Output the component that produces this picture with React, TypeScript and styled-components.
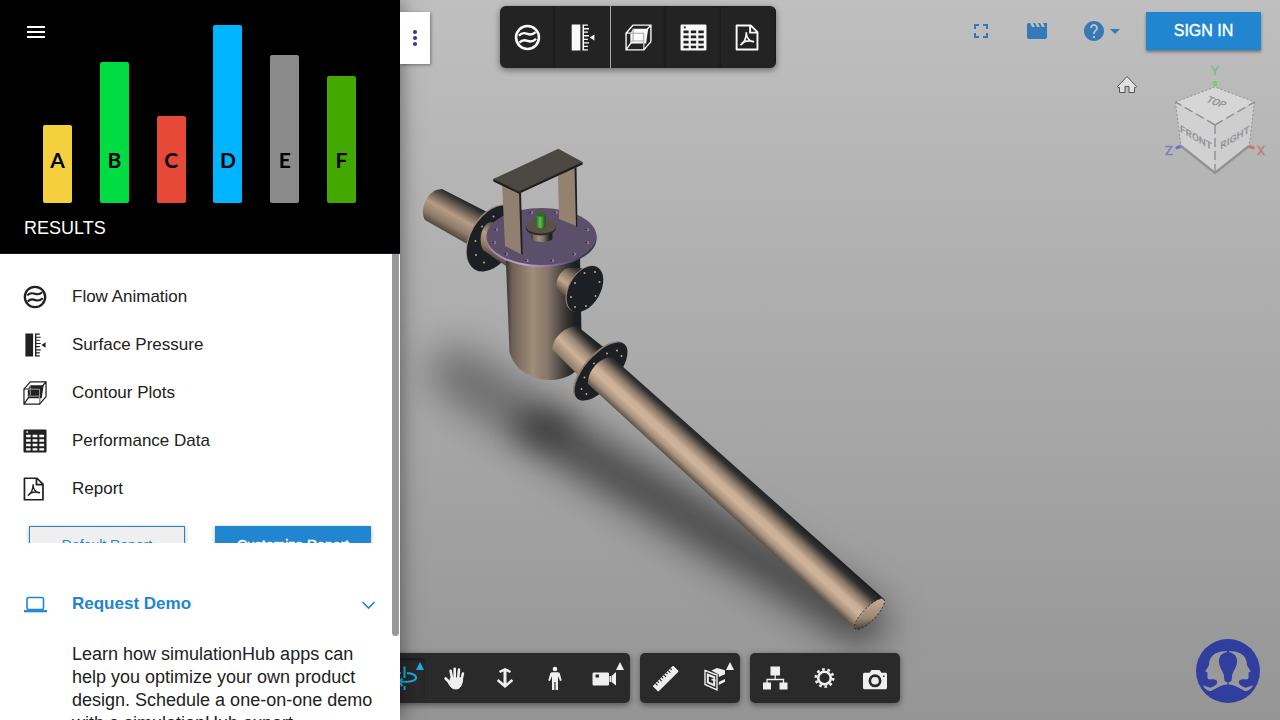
import React from "react";
import styled, { createGlobalStyle, css } from "styled-components";
import { MdMenu, MdFullscreen, MdMovie, MdHelp, MdArrowDropDown } from "react-icons/md";

const GlobalStyle = createGlobalStyle`
  *, *::before, *::after { box-sizing: border-box; }
  html, body { margin: 0; }
  body { font-family: "Liberation Sans", Arial, sans-serif; color: #212121; overflow: hidden; }
  button { font: inherit; border: 0; padding: 0; background: none; color: inherit; cursor: pointer; }
  svg { display: block; }
`;

const Page = styled.div`
  position: relative;
  height: 100vh;
  overflow: hidden;
`;

/* ---------- viewer ---------- */

const Viewer = styled.main`
  position: relative;
  height: 100%;
  display: flex;
  flex-direction: column;
  justify-content: space-between;
  background: linear-gradient(#bfbfbf, #959595);
`;

const Scene = styled.svg`
  position: absolute;
  inset: 0;
  width: 100%;
  height: 100%;
`;

const TopBar = styled.header`
  position: relative;
  display: grid;
  grid-template-columns: 1fr auto 1fr;
  align-items: start;
  padding: 6px 19px 0 14px;
`;

const panelShadow = "0 2px 6px rgba(0, 0, 0, 0.45)";

const ResultBar = styled.nav`
  grid-column: 2;
  display: flex;
  height: 62px;
  border-radius: 6px;
  overflow: hidden;
  background: #232323;
  box-shadow: ${panelShadow};
  color: #fafafa;
`;

const ResultButton = styled.button<{ $divided?: boolean }>`
  display: grid;
  place-items: center;
  width: 55px;
  box-shadow: inset -2px 0 3px -1px #1a1a1a;

  svg {
    width: 27px;
    height: 27px;
  }
  ${(p) =>
    p.$divided &&
    css`
      width: 56px;
      border-right: 1px solid #a8a8a8;
      box-shadow: none;
    `}
`;

const Actions = styled.div`
  justify-self: end;
  display: flex;
  align-items: center;
  padding-top: 6px;
  color: #337ab7;
`;

const ActionButton = styled.button<{ $gap: number }>`
  display: flex;
  align-items: center;
  margin-right: ${(p) => p.$gap}px;
`;

const Caret = styled(MdArrowDropDown)`
  margin-left: -3px;
`;

const SignIn = styled.button`
  width: 115px;
  height: 38px;
  background: #2185d0;
  color: #fff;
  font-size: 16px;
  line-height: 20px;
  -webkit-text-stroke: 0.4px #fff;
  box-shadow: 0 2px 3px rgba(0, 0, 0, 0.4);
`;

const ViewCube = styled.svg`
  position: absolute;
  top: 60px;
  right: 10px;
`;

const BottomBar = styled.footer`
  position: relative;
  display: flex;
  justify-content: center;
  gap: 10px;
  padding-bottom: 17px;
`;

const ToolGroup = styled.div`
  display: flex;
  height: 50px;
  border-radius: 5px;
  background: #2a2a2a;
  box-shadow: ${panelShadow};
  color: #efefef;
`;

const ToolButton = styled.button<{ $active?: boolean }>`
  position: relative;
  display: grid;
  place-items: center;
  width: 50px;
  ${(p) =>
    p.$active &&
    css`
      width: 45px;
      margin: 5px 5px 5px 0;
      color: #17b1e8;
      border-radius: 3px;
      box-shadow: inset 0 2px 3px #1c1c1c;
    `}
`;

const Flyout = styled.span<{ $active?: boolean }>`
  position: absolute;
  top: ${(p) => (p.$active ? 4 : 9)}px;
  right: ${(p) => (p.$active ? 1 : 6)}px;
  border: solid transparent;
  border-width: 0 4px 8px;
  border-bottom-color: currentColor;
`;

const Support = styled.button`
  position: absolute;
  right: 20px;
  bottom: 17px;
  width: 64px;
  height: 64px;
`;

/* ---------- drawer ---------- */

const Drawer = styled.div`
  position: absolute;
  top: 0;
  left: 0;
  height: 100%;
  display: flex;
  align-items: flex-start;
`;

const Panel = styled.aside`
  width: 400px;
  height: 100%;
  display: flex;
  flex-direction: column;
  background: #fff;
  box-shadow: 0 0 20px rgba(0, 0, 0, 0.5);
`;

const DrawerTab = styled.button`
  display: grid;
  place-items: center;
  width: 30px;
  height: 52px;
  margin-top: 12px;
  background: #fff;
  color: #303f9f;
  box-shadow: 1px 1px 3px rgba(0, 0, 0, 0.4);
`;

const Hero = styled.header`
  position: relative;
  flex: none;
  background: #000;
  border-bottom: 1px solid #14122a;
`;

const MenuButton = styled.button`
  position: absolute;
  top: 20px;
  left: 24px;
  color: #fff;
`;

const Bars = styled.div`
  display: flex;
  align-items: flex-end;
  justify-content: space-between;
  height: 203px;
  padding: 0 44px 0 43px;
`;

const Bar = styled.div<{ $h: number; $color: string }>`
  display: flex;
  align-items: flex-end;
  justify-content: center;
  width: 29px;
  height: ${(p) => p.$h}px;
  padding-bottom: 31px;
  border-radius: 2px;
  background: ${(p) => p.$color};
  color: #000;
  font: 700 21px/24px Lato, sans-serif;
`;

const HeroTitle = styled.h1`
  margin: 0;
  padding: 15px 24px 14px;
  color: #fff;
  font-weight: 400;
  font-size: 18px;
  line-height: 21px;
`;

const PanelBody = styled.div`
  flex: 1;
  min-height: 0;
  display: flex;
  overflow: hidden;
`;

const Content = styled.div`
  flex: 1;
  min-width: 0;
`;

const Track = styled.div`
  flex: none;
  width: 8px;
  padding-right: 1px;
`;

const Thumb = styled.div`
  height: 82%;
  border-radius: 0 0 4px 4px;
  background: #999;
`;

const ResultSection = styled.section`
  max-height: 289px;
  overflow: hidden;
  padding-top: 19px;
`;

const List = styled.ul`
  margin: 0;
  padding: 0;
  list-style: none;
`;

const Row = styled.button`
  display: flex;
  align-items: center;
  gap: 25px;
  width: 100%;
  height: 48px;
  padding: 0 22px 0 23px;
  text-align: left;
  color: #212121;
  font-size: 17px;
  line-height: 24px;
`;

const Buttons = styled.div`
  display: flex;
  gap: 30px;
  padding: 13px 21px 13px 29px;
`;

const ReportButton = styled.button<{ $primary?: boolean }>`
  flex: 1;
  height: 38px;
  border: 1px solid #2185d0;
  background: ${(p) => (p.$primary ? "#2185d0" : "#efefef")};
  color: ${(p) => (p.$primary ? "#fff" : "#2185d0")};
  font-size: 14px;
  line-height: 18px;
  -webkit-text-stroke: ${(p) => (p.$primary ? "0.5px #fff" : "0")};
  box-shadow: 0 1px 4px rgba(0, 0, 0, 0.3);
`;

const DemoSection = styled.section`
  padding-top: 37px;
`;

const DemoRow = styled(Row)`
  padding-right: 16px;
  color: #2185d0;
  font-weight: 700;
`;

const DemoLabel = styled.span`
  flex: 1;
`;

const DemoText = styled.p`
  margin: 0;
  padding: 15px 16px 0 72px;
  font-size: 18px;
  line-height: 23px;
`;

/* ---------- icons ---------- */

const FlowIcon = () => (
  <svg width="24" height="24" viewBox="0 0 25 25" fill="none" stroke="currentColor" strokeWidth="2.2">
    <circle cx="12.5" cy="12.5" r="10.6" strokeWidth="2.4" />
    <path d="M4.500 10.800C7.500 7.600 9.800 8.200 12.500 9.200S17.500 9.800 20 7.600M5 17.200C7.800 14.200 10 14.600 12.500 15.600S17.600 16.400 20.500 13.800" />
  </svg>
);

const PressureIcon = () => (
  <svg width="24" height="24" viewBox="0 0 25 25" fill="currentColor">
    <path d="M2.500 .5h8v24h-8zM12.500 .5h1.400v24h-1.400z" />
    <path d="M13.500 .5h4v1.200h-4zM13.500 3.800h5V5h-5zM13.500 7h4v1.200h-4zM13.500 10.300h5v1.200h-5zM13.500 13.600h4v1.200h-4zM13.500 16.900h5v1.200h-5zM13.500 20.100h4v1.200h-4zM13.500 23.300h4v1.200h-4zM19.200 12.500l4.300-2.800v5.600z" />
  </svg>
);

const ContourIcon = () => (
  <svg width="24" height="24" viewBox="0 0 25 25" fill="none" stroke="currentColor" strokeWidth="1.300">
    <path d="M5 8.500 7.500 4.300h14L19.500 18H5z" fill="currentColor" stroke="none" />
    <path d="M1 8.500h16.300v15.500H1zM7.500 1h16.500v15.300M1 8.500L7.500 1M17.300 8.500L24 1M17.300 24L24 16.300M1 24l4.500-6.500" />
    <path d="M2 8.500h15.300V23M7.500 4.300V15M5.500 15.800h11.500" stroke="#a5a5a5" strokeWidth="1" />
  </svg>
);

const TableIcon = () => (
  <svg width="24" height="24" viewBox="0 0 25 25" fill="currentColor">
    <path
      fillRule="evenodd"
      d="M.5 1.500a1 1 0 0 1 1-1h22a1 1 0 0 1 1 1v22a1 1 0 0 1-1 1h-22a1 1 0 0 1-1-1zM3.200 6h4.800v2.600H3.200zM10 6h5v2.600h-5zM17 6h5v2.600h-5zM3.200 10.700h4.800v2.600H3.200zM10 10.700h5v2.600h-5zM17 10.700h5v2.600h-5zM3.200 15.400h4.800V18H3.200zM10 15.400h5V18h-5zM17 15.400h5V18h-5zM3.200 20.100h4.800v2.400H3.200zM10 20.100h5v2.400h-5zM17 20.100h5v2.400h-5zM3.500 2.300h1.800v1.700H3.500z"
    />
  </svg>
);

const PdfIcon = () => (
  <svg width="24" height="24" viewBox="0 0 25 25" fill="none" stroke="currentColor" strokeWidth="1.800" strokeLinejoin="round">
    <path d="M1.500 1.300h13l6.300 6.200v16.200H1.500zM14 1.300v6.700h6.800" />
    <path d="M10.600 7.500C10.400 13 8.500 17.500 5 19.500M10.500 8.500C10.500 12 13 16 17 16.500M6.500 17.600C9.500 15.500 13 15 17.800 16.400" strokeWidth="1.500" />
  </svg>
);

const LaptopIcon = () => (
  <svg width="24" height="17" viewBox="0 0 24 17" fill="none" stroke="currentColor">
    <rect x="4" y="1.500" width="16.500" height="12" rx="1.500" strokeWidth="1.600" />
    <path d="M1 15.200h23" strokeWidth="2.200" />
  </svg>
);

const ChevronIcon = () => (
  <svg width="15" height="15" viewBox="0 0 15 15" fill="none" stroke="currentColor" strokeWidth="1.600">
    <path d="M1.500 5l6 6 6-6" />
  </svg>
);

const DotsIcon = () => (
  <svg width="6" height="18" viewBox="0 0 6 18" fill="currentColor">
    <circle cx="3" cy="3" r="2.100" />
    <circle cx="3" cy="9" r="2.100" />
    <circle cx="3" cy="15" r="2.100" />
  </svg>
);

const OrbitIcon = () => (
  <svg width="28" height="28" viewBox="0 0 28 28" fill="none" stroke="currentColor" strokeWidth="2">
    <path d="M15.500 2.500v11.500M15.500 22v4" />
    <path d="M18 9c11 1 12 7 3 8.500-3 .500-6 .400-9-.100M12 9C2 10 1 15 6 17.200M13.500 14.500l-3.500 3.500 3.500 4" />
  </svg>
);

const PanIcon = () => (
  <svg width="28" height="28" viewBox="0 0 28 28" fill="none" stroke="currentColor" strokeLinecap="round">
    <path d="M9.600 6.800l1.700 9M13.700 4.800v10M18 5.600l-1 10M21.900 9.500l-1.700 8M4.600 14.500l5 5" strokeWidth="2.600" />
    <path d="M9.700 14.200l10.800-.4 1 2.200c-.6 5-2.200 8.500-5.500 8.900-4.500.5-6-1.400-8.400-5.400l1-1.200z" fill="currentColor" strokeWidth="1" />
  </svg>
);

const ZoomIcon = () => (
  <svg width="28" height="28" viewBox="0 0 28 28" fill="none" stroke="currentColor" strokeWidth="2.500">
    <path d="M14 6v16" strokeWidth="3" />
    <path d="M8.500 8L14 5.300 19.500 8M6.600 16L14 22.300l7.400-6.300" />
  </svg>
);

const WalkIcon = () => (
  <svg width="28" height="28" viewBox="0 0 28 28" fill="currentColor">
    <circle cx="14" cy="5" r="2.300" />
    <path d="M11 8.200h6c1.200 0 1.700.8 2 2l1.700 6.400-1.700.5-2-5v14h-2.400V18h-1.200v8.100H11v-14l-2 5-1.700-.5L9 10.200c.3-1.200.8-2 2-2z" />
  </svg>
);

const VideoIcon = () => (
  <svg width="28" height="28" viewBox="0 0 28 28" fill="currentColor">
    <path fillRule="evenodd" d="M3 8.500h13.500c1 0 1.500.5 1.500 1.500v10c0 1-.5 1.500-1.500 1.500H3c-1 0-1.500-.5-1.500-1.500V10C1.500 9 2 8.500 3 8.500zm1.500 2v3H8v-3zM18.500 12h1.500v6h-1.500zM20.500 12l4.500-4v13.500l-4.500-3.500z" />
  </svg>
);

const RulerIcon = () => (
  <svg width="28" height="28" viewBox="0 0 28 28">
    <g transform="rotate(-45 14 14)">
      <rect x="-.5" y="11" width="29" height="8" rx="1" fill="currentColor" />
      <path d="M3.500 11v3M6.500 11v2M9.500 11v3M12.500 11v2M15.500 11v3M18.500 11v2M21.500 11v3M24.500 11v2" stroke="#2a2a2a" strokeWidth="1.200" />
    </g>
  </svg>
);

const SectionIcon = () => (
  <svg width="28" height="28" viewBox="0 0 28 28" fill="none" stroke="currentColor">
    <path d="M4 6.500l12 4.500v15l-12-5.500z" strokeWidth="1.400" />
    <path d="M6.800 10.800l6.400 2.400v8l-6.400-2.800z" strokeWidth="2" />
    <path d="M10.500 6.500l5.500-2.500L24 6.300v4L17.800 13v-2.500zM17.800 18l6.200-3v2.800l-6.200 3.200z" fill="currentColor" stroke="none" />
    <path d="M10.500 15.500l4 1" strokeWidth="1.500" />
  </svg>
);

const TreeIcon = () => (
  <svg width="28" height="28" viewBox="0 0 28 28" fill="currentColor">
    <path d="M9.500 2.500H19v9H9.500zM2 18.500h8v7H2zM18.500 18.500h8v7h-8z" />
    <path d="M14.200 11v4.500M6 19v-3.500h16.500V19" fill="none" stroke="currentColor" strokeWidth="1.300" />
  </svg>
);

const GearIcon = () => (
  <svg width="28" height="28" viewBox="0 0 28 28" fill="none" stroke="currentColor">
    <circle cx="13.500" cy="14" r="6.300" strokeWidth="2.600" />
    <circle cx="13.500" cy="14" r="8.700" strokeWidth="2.600" strokeDasharray="2.733 2.733" />
  </svg>
);

const CameraIcon = () => (
  <svg width="28" height="28" viewBox="0 0 28 28" fill="currentColor">
    <path
      fillRule="evenodd"
      d="M4 8.800h4.500L10.500 6h8l2 2.800H24c1.500 0 2 .6 2 2v12.400c0 1.400-.5 2-2 2H4c-1.500 0-2-.6-2-2V10.800c0-1.400.5-2 2-2zM14 10.300a6.500 6.500 0 1 0 0 13 6.500 6.500 0 0 0 0-13zm0 2.700a3.800 3.800 0 1 1 0 7.600 3.800 3.800 0 0 1 0-7.600zM22 11.500v1.500h1.500v-1.500z"
    />
  </svg>
);

const headPath =
  "M31 12.200C18 11.500 13 18.500 13 26C12.500 28 9.500 31 9.500 32.500L11.500 33.500L11.500 38.500C11.500 40.200 13 40.600 15 40.300C19 39.800 21.500 41 21.200 43.500C20.500 46.500 17 47.800 14 48.800L7 46.200C8.500 50 12 52 15 52C20 49.500 25 46 31.400 45.600V43.500L28.500 42L27.800 36C26.500 31 23 28 23 22.500C23 17 26 13.800 31 13.200Z";

const SupportLogo = () => (
  <svg width="64" height="64" viewBox="0 0 64 64">
    <circle cx="32" cy="32" r="32" fill="#303f9f" />
    <path d={headPath} fill="#9a9a9a" />
    <path d={headPath} fill="#9a9a9a" transform="matrix(-1 0 0 1 64 0)" />
  </svg>
);

/* ---------- 3D scene ---------- */

const plateHoles = [
  [531.5, 212.5], [556, 212.5], [587.5, 229.5], [587.5, 242.5], [574.5, 254],
  [552.5, 260.5], [527, 260.5], [506.5, 254], [494.5, 242.5], [496.5, 229.5],
];

const flangeHoles = [
  [493.5, 216.5], [482, 226.5], [475.5, 241], [476, 255], [484, 262.5],
  [584.5, 273], [595, 272], [599.5, 282], [595.5, 296], [586, 306], [575, 307], [571, 297], [575, 283],
  [607, 353.5], [617, 350.5], [621.5, 356], [594, 363.5], [584.5, 377.5], [581.5, 389], [586.5, 394],
];

const Model = () => (
  <Scene viewBox="0 0 1280 720" preserveAspectRatio="xMidYMid slice" role="img" aria-label="3D model of valve assembly">
    <defs>
      <filter id="soft" x="-30%" y="-30%" width="160%" height="160%">
        <feGaussianBlur stdDeviation="20" />
      </filter>
      <filter id="core" x="-60%" y="-100%" width="220%" height="300%">
        <feGaussianBlur stdDeviation="15" />
      </filter>
      <linearGradient id="longPipe" gradientUnits="userSpaceOnUse" x1="727" y1="511" x2="754" y2="481.5">
        <stop offset="0" stopColor="#5e5348" />
        <stop offset=".15" stopColor="#a8927d" />
        <stop offset=".32" stopColor="#cfb49b" />
        <stop offset=".45" stopColor="#cab097" />
        <stop offset=".65" stopColor="#8b7968" />
        <stop offset=".85" stopColor="#2f2f2f" />
        <stop offset="1" stopColor="#1b1f22" />
      </linearGradient>
      <linearGradient id="neckPipe" gradientUnits="userSpaceOnUse" x1="565" y1="362" x2="590" y2="337">
        <stop offset="0" stopColor="#8b7866" />
        <stop offset=".35" stopColor="#cdb399" />
        <stop offset=".6" stopColor="#a08b77" />
        <stop offset=".9" stopColor="#2b2b2b" />
        <stop offset="1" stopColor="#1b1f22" />
      </linearGradient>
      <linearGradient id="sidePipe" gradientUnits="userSpaceOnUse" x1="559" y1="292" x2="575" y2="269">
        <stop offset="0" stopColor="#54493f" />
        <stop offset=".4" stopColor="#c0a78f" />
        <stop offset=".7" stopColor="#8f7c6a" />
        <stop offset="1" stopColor="#3a3633" />
      </linearGradient>
      <linearGradient id="inletPipe" gradientUnits="userSpaceOnUse" x1="445" y1="231" x2="463" y2="199">
        <stop offset="0" stopColor="#54493f" />
        <stop offset=".2" stopColor="#8d7968" />
        <stop offset=".5" stopColor="#b59c86" />
        <stop offset=".75" stopColor="#6b5e52" />
        <stop offset="1" stopColor="#1b1f22" />
      </linearGradient>
      <linearGradient id="body">
        <stop offset="0" stopColor="#343230" />
        <stop offset=".08" stopColor="#6d6156" />
        <stop offset=".35" stopColor="#a08d7a" />
        <stop offset=".55" stopColor="#86766a" />
        <stop offset=".8" stopColor="#353331" />
        <stop offset=".9" stopColor="#1c2025" />
        <stop offset="1" stopColor="#1c2025" />
      </linearGradient>
      <linearGradient id="rim">
        <stop offset="0" stopColor="#a888b5" />
        <stop offset=".35" stopColor="#c6a0d2" />
        <stop offset=".65" stopColor="#7d6690" />
        <stop offset="1" stopColor="#241f30" />
      </linearGradient>
      <linearGradient id="green">
        <stop offset="0" stopColor="#2c7a22" />
        <stop offset=".4" stopColor="#5cc14b" />
        <stop offset="1" stopColor="#1e4a1a" />
      </linearGradient>
      <linearGradient id="opening" gradientUnits="userSpaceOnUse" x1="856" y1="628" x2="882" y2="600">
        <stop offset="0" stopColor="#1b1f22" />
        <stop offset=".4" stopColor="#9a8672" />
        <stop offset="1" stopColor="#d0b59c" />
      </linearGradient>
    </defs>

    <g fill="none" strokeLinecap="round">
      <path d="M455 372L550 432L700 525L862 622" stroke="#000" strokeOpacity=".38" strokeWidth="50" filter="url(#soft)" />
      <path d="M540 430L650 492L780 570L860 620" stroke="#000" strokeOpacity=".3" strokeWidth="34" filter="url(#core)" />
      <ellipse cx="543" cy="426" rx="34" ry="18" fill="#000" fillOpacity=".28" filter="url(#core)" />
    </g>

    <path d="M442 189L487 212L469 245L425 220C420 212 424 196 436 190Z" fill="url(#inletPipe)" />
    <ellipse cx="492" cy="237.500" rx="36" ry="22" transform="rotate(-60 492 237.500)" fill="#a08c79" />
    <ellipse cx="493" cy="238.500" rx="36" ry="22" transform="rotate(-60 493 238.500)" fill="#1c2025" />
    <path d="M490 222C481 226 478 240 483 250L506 266V222Z" fill="url(#inletPipe)" />

    <path d="M506 255V264L509.500 352C514 369 530 380 550 380C566 380 580 372 582 360L580 255Z" fill="url(#body)" />
    <ellipse cx="541.500" cy="238.500" rx="55" ry="28.500" fill="url(#rim)" />
    <ellipse cx="541.500" cy="236.500" rx="55" ry="28.500" fill="#5c4f69" />
    {plateHoles.map(([x, y]) => (
      <g key={`${x}-${y}`}>
        <circle cx={x} cy={y} r="1.500" fill="#a586b2" />
        <circle cx={x - 1} cy={y} r="1" fill="#2c2436" />
      </g>
    ))}

    <path d="M558 174L576 167L577.500 226.500L559 219Z" fill="#94826f" />
    <path d="M574.500 168L576.500 167L577.500 227L576 226.500Z" fill="#1c2025" />
    <path d="M531.500 231V239C535 243 549 243 552.500 239V231Z" fill="url(#body)" />
    <ellipse cx="541" cy="228" rx="15" ry="7.500" fill="#2b2a29" />
    <ellipse cx="541" cy="226" rx="15" ry="7.500" fill="#595147" />
    <path d="M536.500 214V227C539 228.500 543 228.500 545.500 227V214Z" fill="url(#green)" />
    <ellipse cx="541" cy="214.500" rx="4.500" ry="2.200" fill="#2f6b22" />

    <path d="M502 182L520 191L522.500 255L505 246Z" fill="#918070" />
    <path d="M519 192H521L522.800 255L521 254Z" fill="#1c2025" />
    <path d="M493.300 179V181.500L519 193.800L582.700 164.500V162Z" fill="#1c2025" />
    <path d="M493.300 179L558.300 148.700L582.700 162L519 191.500Z" fill="#4d4741" />

    <path d="M568 268C561 270 555 279 556.500 289C557.500 292 560 293 570 297L582 268Z" fill="url(#sidePipe)" />
    <ellipse cx="583.500" cy="288.500" rx="25" ry="15" transform="rotate(-60 583.500 288.500)" fill="#94826f" />
    <ellipse cx="585" cy="289" rx="25" ry="15.500" transform="rotate(-60 585 289)" fill="#1c2025" />

    <path d="M577 326L612 354L583 380L552 349C553 337 566 326 577 326Z" fill="url(#neckPipe)" />
    <ellipse cx="599.500" cy="370.500" rx="36" ry="16" transform="rotate(-49 599.500 370.500)" fill="#8f7d6c" />
    <ellipse cx="601" cy="371.500" rx="36" ry="16" transform="rotate(-49 601 371.500)" fill="#1c2025" />
    {flangeHoles.map(([x, y]) => (
      <circle key={`${x}-${y}`} cx={x} cy={y} r="1" fill="#c0a994" />
    ))}
    <path d="M612 357L884 599L855 629L588 384C587 371 600 357 612 357Z" fill="url(#longPipe)" />
    <ellipse cx="869.500" cy="614" rx="20.500" ry="6.500" transform="rotate(-46 869.500 614)" fill="url(#opening)" stroke="#1b1f22" strokeWidth=".8" strokeDasharray="2 2" />
  </Scene>
);

const cubeText = { fontFamily: "Roboto, sans-serif", textAnchor: "middle" as const };

const Cube = () => (
  <ViewCube width="160" height="120" viewBox="1110 60 160 120" role="img" aria-label="View cube">
    <path
      d="M1127 76.500L1117.500 86.500L1118 87.500H1119.500V92.500H1125V86.500H1129V92.500H1134.500V87.500H1136L1136.500 86.500Z"
      fill="#e0e0e0" stroke="#555" strokeWidth="1"
    />
    <rect x="1213" y="81" width="4" height="5" fill="#6ed36e" />
    <path d="M1176 147l5-2v2.500l-5 1.500z" fill="#6d6dd8" stroke="#6d6dd8" />
    <path d="M1254 147l-5-2v2.500l5 1.500z" fill="#d86d6d" stroke="#d86d6d" />
    <path d="M1215 87L1175.500 102L1215 125L1254.500 102Z" fill="#d6d6d6" />
    <path d="M1175.500 102L1215 125V173L1181 146Z" fill="#d1d1d1" />
    <path d="M1254.500 102L1215 125V173L1249 146Z" fill="#cecece" />
    <g fill="none" stroke="#929292">
      <path d="M1175.500 102L1215 87L1254.500 102M1175.500 102L1181 146M1254.500 102L1249 146" strokeDasharray="2 2" />
      <path d="M1215 125L1175.500 102M1215 125L1254.500 102M1215 125V173" strokeWidth="1.500" strokeDasharray="9 4" />
      <path d="M1181 146L1215 173L1249 146" strokeWidth="2.400" />
    </g>
    <g {...cubeText} fontWeight="700" fontSize="10" fill="#95979b">
      <text transform="translate(1196 141) skewY(30)">FRONT</text>
      <text transform="translate(1235 141) skewY(-31)">RIGHT</text>
      <text transform="translate(1214 105) rotate(20) skewX(-20)">TOP</text>
    </g>
    <g {...cubeText} fontSize="13" strokeWidth=".4">
      <text x="1215" y="75" fill="#83b983" stroke="#83b983">Y</text>
      <text x="1169" y="155" fill="#8080bd" stroke="#8080bd">Z</text>
      <text x="1261" y="155" fill="#bd8080" stroke="#bd8080">X</text>
    </g>
  </ViewCube>
);

/* ---------- page ---------- */

const bars = [
  { label: "A", h: 78, color: "#f4d03f" },
  { label: "B", h: 141, color: "#00dc41" },
  { label: "C", h: 87, color: "#e64937" },
  { label: "D", h: 178, color: "#00b4ff" },
  { label: "E", h: 148, color: "#8a8a8a" },
  { label: "F", h: 127, color: "#43a800" },
];

const results = [
  { label: "Flow Animation", Icon: FlowIcon },
  { label: "Surface Pressure", Icon: PressureIcon },
  { label: "Contour Plots", Icon: ContourIcon },
  { label: "Performance Data", Icon: TableIcon },
  { label: "Report", Icon: PdfIcon },
];

const toolGroups = [
  [
    { label: "Orbit", Icon: OrbitIcon, flyout: true, active: true },
    { label: "Pan", Icon: PanIcon },
    { label: "Zoom", Icon: ZoomIcon },
    { label: "First person", Icon: WalkIcon },
    { label: "Camera interactions", Icon: VideoIcon, flyout: true },
  ],
  [
    { label: "Measure", Icon: RulerIcon },
    { label: "Section analysis", Icon: SectionIcon, flyout: true },
  ],
  [
    { label: "Model browser", Icon: TreeIcon },
    { label: "Settings", Icon: GearIcon },
    { label: "Screenshot", Icon: CameraIcon },
  ],
] as { label: string; Icon: React.FC; flyout?: boolean; active?: boolean }[][];

export default function App() {
  return (
    <Page>
      <GlobalStyle />
      <Viewer>
        <Model />
        <TopBar>
          <ResultBar>
            {results.map(({ label, Icon }, i) => (
              <ResultButton key={label} aria-label={label} $divided={i === 1}>
                <Icon />
              </ResultButton>
            ))}
          </ResultBar>
          <Actions>
            <ActionButton aria-label="Full screen" $gap={32}>
              <MdFullscreen size={24} />
            </ActionButton>
            <ActionButton aria-label="Videos" $gap={33}>
              <MdMovie size={24} />
            </ActionButton>
            <ActionButton aria-label="Help" $gap={19}>
              <MdHelp size={24} />
              <Caret size={24} />
            </ActionButton>
            <SignIn>SIGN IN</SignIn>
          </Actions>
        </TopBar>
        <Cube />
        <BottomBar>
          {toolGroups.map((group) => (
            <ToolGroup key={group[0].label}>
              {group.map(({ label, Icon, flyout, active }) => (
                <ToolButton key={label} aria-label={label} $active={active}>
                  <Icon />
                  {flyout && <Flyout $active={active} />}
                </ToolButton>
              ))}
            </ToolGroup>
          ))}
        </BottomBar>
        <Support aria-label="Support">
          <SupportLogo />
        </Support>
      </Viewer>

      <Drawer>
        <Panel>
          <Hero>
            <MenuButton aria-label="Menu">
              <MdMenu size={24} />
            </MenuButton>
            <Bars>
              {bars.map((b) => (
                <Bar key={b.label} $h={b.h} $color={b.color}>
                  {b.label}
                </Bar>
              ))}
            </Bars>
            <HeroTitle>RESULTS</HeroTitle>
          </Hero>
          <PanelBody>
            <Content>
              <ResultSection>
                <List>
                  {results.map(({ label, Icon }) => (
                    <li key={label}>
                      <Row>
                        <Icon />
                        {label}
                      </Row>
                    </li>
                  ))}
                </List>
                <Buttons>
                  <ReportButton>Default Report</ReportButton>
                  <ReportButton $primary>Customize Report</ReportButton>
                </Buttons>
              </ResultSection>
              <DemoSection>
                <DemoRow>
                  <LaptopIcon />
                  <DemoLabel>Request Demo</DemoLabel>
                  <ChevronIcon />
                </DemoRow>
                <DemoText>
                  Learn how simulationHub apps can help you optimize your own product design. Schedule a one-on-one
                  demo with a simulationHub expert.
                </DemoText>
              </DemoSection>
            </Content>
            <Track>
              <Thumb />
            </Track>
          </PanelBody>
        </Panel>
        <DrawerTab aria-label="More options">
          <DotsIcon />
        </DrawerTab>
      </Drawer>
    </Page>
  );
}
